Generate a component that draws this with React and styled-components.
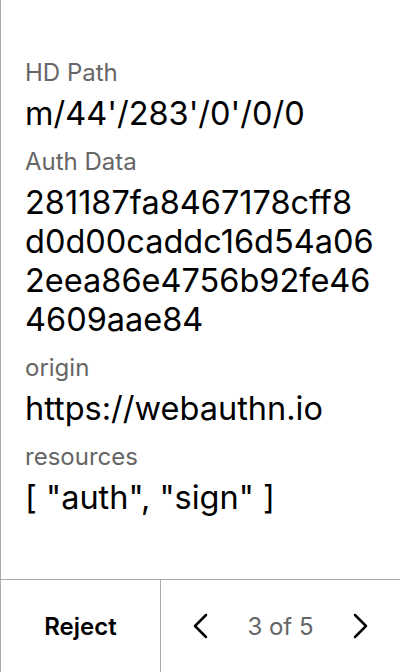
import React from "react";
import styled, { createGlobalStyle } from "styled-components";

const Global = createGlobalStyle`
  html, body { margin: 0; padding: 0; background: #fff; }
  body { font-family: Inter, "Noto Sans", sans-serif; }
`;

const Screen = styled.div`
  width: 400px;
  height: 672px;
  box-sizing: border-box;
  border-left: 1px solid #aaa;
  display: flex;
  flex-direction: column;
`;

const Body = styled.div`
  flex: 1;
  padding: 58px 24px 0 24px;
  display: flex;
  flex-direction: column;
`;

const Label = styled.div`
  font-size: 24px;
  line-height: 30px;
  color: #666;
  margin-bottom: 6px;
`;

const Value = styled.div`
  font-size: 32.5px;
  line-height: 39px;
  color: #000;
  margin-bottom: 14px;
  white-space: pre-line;
  word-break: break-all;
`;

const Footer = styled.div`
  height: 92px;
  border-top: 1px solid #aaa;
  display: flex;
`;

const RejectButton = styled.button`
  width: 160px;
  border: none;
  border-right: 1px solid #aaa;
  background: none;
  font-family: inherit;
  font-size: 24px;
  font-weight: 600;
  color: #000;
  padding: 0;
`;

const Pager = styled.div`
  flex: 1;
  display: flex;
  align-items: center;
  justify-content: space-between;
  padding: 0 27px;
`;

const NavButton = styled.button`
  border: none;
  background: none;
  padding: 0;
  display: flex;
  color: #000;
`;

const Count = styled.span`
  font-size: 24px;
  color: #666;
`;

const Chevron = ({ dir }) => (
  <svg width="24" height="28" viewBox="0 0 24 28" fill="none" stroke="currentColor" strokeWidth="2.5" strokeLinecap="round" strokeLinejoin="round">
    {dir === "left" ? <path d="M18 3 L7 14 L18 25" /> : <path d="M6 3 L17 14 L6 25" />}
  </svg>
);

const fields = [
  { label: "HD Path", value: "m/44'/283'/0'/0/0" },
  {
    label: "Auth Data",
    value: ["281187fa8467178cff8", "d0d00caddc16d54a06", "2eea86e4756b92fe46", "4609aae84"].join("\n"),
  },
  { label: "origin", value: "https://webauthn.io" },
  { label: "resources", value: '[ "auth", "sign" ]' },
];

export default function App() {
  return (
    <>
      <Global />
      <Screen>
        <Body>
          {fields.map((f) => (
            <React.Fragment key={f.label}>
              <Label>{f.label}</Label>
              <Value>{f.value}</Value>
            </React.Fragment>
          ))}
        </Body>
        <Footer>
          <RejectButton>Reject</RejectButton>
          <Pager>
            <NavButton><Chevron dir="left" /></NavButton>
            <Count>3 of 5</Count>
            <NavButton><Chevron dir="right" /></NavButton>
          </Pager>
        </Footer>
      </Screen>
    </>
  );
}
